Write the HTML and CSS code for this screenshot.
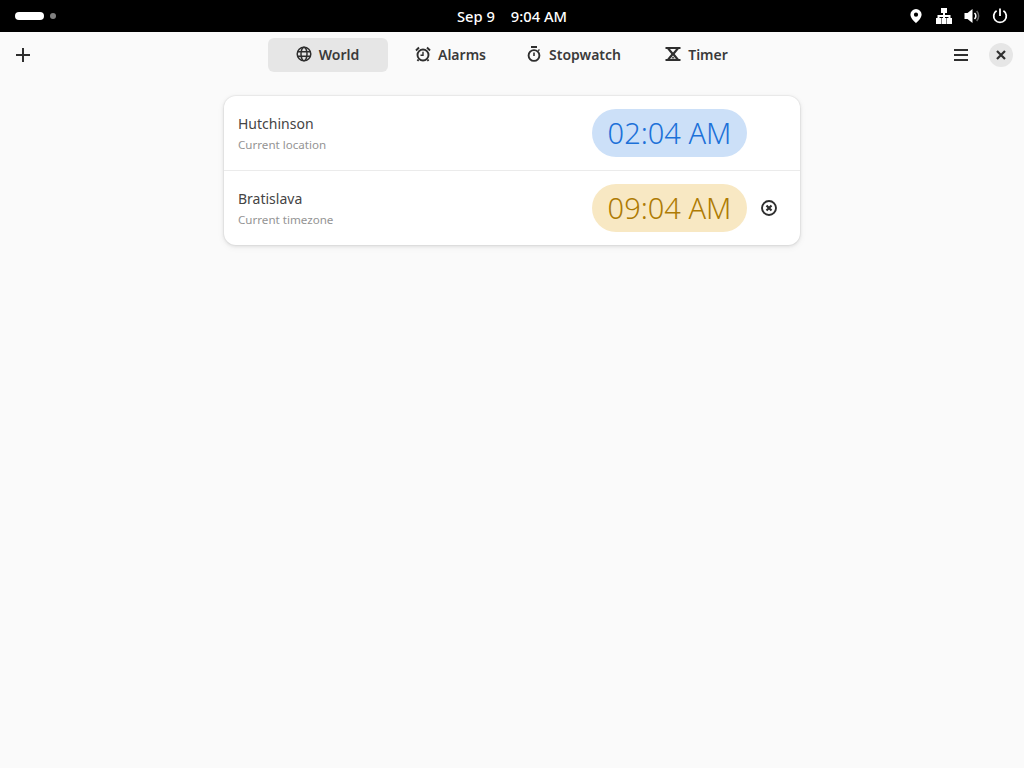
FILE: index.html
```html
<!DOCTYPE html>
<html lang="en">
<head>
    <meta charset="UTF-8">
    <meta name="viewport" content="width=device-width, initial-scale=1.0">
    <title>Clocks</title>
    <link rel="stylesheet" href="styles.css">
</head>
<body>
    <div class="topbar">
        <div class="workspaces">
            <span class="ws-active"></span>
            <span class="ws-dot"></span>
        </div>
        <div class="clock">
            <span>Sep 9</span>
            <span>9:04 AM</span>
        </div>
        <div class="tray">
            <svg class="tray-icon" viewBox="0 0 16 16"><path fill-rule="evenodd" d="M8 1a5.600 5.600 0 0 0-5.600 5.600C2.400 10 6 13.400 8 15.200c2-1.800 5.600-5.200 5.600-8.600A5.600 5.600 0 0 0 8 1zm0 3.600a2.100 2.100 0 1 1 0 4.200 2.100 2.100 0 0 1 0-4.200z" fill="#fff"/></svg>
            <svg class="tray-icon" viewBox="0 0 16 16" fill="#fff"><path d="M5 0h6v5H5zM0 10h5v6H0zM5.500 10h5v6h-5zM11 10h5v6h-5z"/><path d="M7 5h2v2h5.500v3h-2V9H9v1H7V9H3.500v1h-2V7H7z"/></svg>
            <svg class="tray-icon" viewBox="0 0 16 16"><path d="M0.500 5h3L8.500 1v14l-5-4h-3z" fill="#fff"/><path d="M10.500 5a4 4 0 0 1 0 6" fill="none" stroke="#fff" stroke-width="1.600"/><path d="M12.700 3a7.500 7.500 0 0 1 0 10" fill="none" stroke="#666" stroke-width="1.600"/></svg>
            <svg class="tray-icon" viewBox="0 0 16 16" fill="none" stroke="#fff" stroke-width="1.800"><path d="M8 0.500v7.500"/><path d="M4.600 2.800a6.300 6.300 0 1 0 6.800 0"/></svg>
        </div>
    </div>

    <header class="headerbar">
        <div class="header-left">
            <button class="icon-btn">
                <svg viewBox="0 0 16 16" fill="none" stroke="#2e2e2e" stroke-width="2"><path d="M8 1v14M1 8h14"/></svg>
            </button>
        </div>
        <nav class="tabs">
            <button class="tab tab-active">
                <svg viewBox="0 0 16 16" fill="none" stroke="#2e2e2e" stroke-width="1.500"><circle cx="8" cy="8" r="6.800"/><ellipse cx="8" cy="8" rx="3" ry="6.800"/><path d="M1.500 5.700h13M1.500 10.300h13"/></svg>
                <span>World</span>
            </button>
            <button class="tab">
                <svg viewBox="0 0 16 16" fill="none" stroke="#2e2e2e" stroke-width="1.900"><circle cx="8" cy="9" r="5.500"/><path d="M8 5.700V9.300H5.500" stroke-width="1.400"/><path d="M1 4.500 4 1.500M15 4.500 12 1.500M3.500 13.500 2.500 15M12.500 13.500l1 1.500"/></svg>
                <span>Alarms</span>
            </button>
            <button class="tab">
                <svg viewBox="0 0 16 16" fill="none" stroke="#2e2e2e" stroke-width="1.900"><circle cx="8" cy="9.500" r="5.400"/><path d="M5 1h6" stroke-width="2"/><path d="M8 6.500v3.500" stroke-width="1.600"/><path d="M12.200 4.700l1.300-1.200" stroke-width="1.400"/></svg>
                <span>Stopwatch</span>
            </button>
            <button class="tab">
                <svg viewBox="0 0 16 16"><path d="M0.500 1h15v2h-1.700L9.700 8l4.100 5h1.700v2H0.500v-2h1.700l4.100-5-4.100-5H0.500z" fill="#2e2e2e"/><path d="M5 3h6L8 6.500zM8 9.500l2.900 3.500H5.100z" fill="#fafafa"/><path d="M6.300 12.600h3.400L8 10.400z" fill="#2e2e2e"/></svg>
                <span>Timer</span>
            </button>
        </nav>
        <div class="header-right">
            <button class="icon-btn">
                <svg viewBox="0 0 16 16" fill="none" stroke="#2e2e2e" stroke-width="2"><path d="M1 3h14M1 8h14M1 13h14"/></svg>
            </button>
            <button class="close-btn">
                <svg viewBox="0 0 16 16" fill="none" stroke="#2e2e2e" stroke-width="2.200"><path d="M4 4l8 8M12 4l-8 8"/></svg>
            </button>
        </div>
    </header>

    <main class="content">
        <div class="card">
            <div class="row">
                <div class="place">
                    <div class="place-name">Hutchinson</div>
                    <div class="place-note">Current location</div>
                </div>
                <div class="time time-night">02:04 AM</div>
                <div class="row-action"></div>
            </div>
            <div class="row">
                <div class="place">
                    <div class="place-name">Bratislava</div>
                    <div class="place-note">Current timezone</div>
                </div>
                <div class="time time-day">09:04 AM</div>
                <div class="row-action">
                    <svg viewBox="0 0 16 16" fill="none" stroke="#2e2e2e"><circle cx="8" cy="8" r="7" stroke-width="1.900"/><path d="M5.500 5.500l5 5M10.500 5.500l-5 5" stroke-width="2.200"/></svg>
                </div>
            </div>
        </div>
    </main>
</body>
</html>
```

FILE: styles.css
```css
body {
    font-family: "Noto Sans", sans-serif;
    background-color: #fafafa;
    color: #2e2e2e;
    margin: 0;
    min-height: 100vh;
}

button {
    font-family: inherit;
    color: inherit;
    background: none;
    border: none;
    padding: 0;
}

.topbar {
    display: grid;
    grid-template-columns: 1fr auto 1fr;
    align-items: center;
    height: 32px;
    background-color: #000;
    color: #fff;
    font-size: 14.700px;
    font-weight: 500;
}

.workspaces {
    display: flex;
    align-items: center;
    gap: 6px;
    padding-left: 15px;
}

.ws-active {
    width: 29px;
    height: 8px;
    border-radius: 4px;
    background-color: #fff;
}

.ws-dot {
    width: 6px;
    height: 6px;
    border-radius: 50%;
    background-color: #808080;
}

.clock {
    display: flex;
    gap: 16px;
    margin-top: -1px;
}

.tray {
    display: flex;
    justify-content: flex-end;
    gap: 12px;
    padding-right: 16px;
}

.tray-icon {
    width: 16px;
    height: 16px;
}

.headerbar {
    display: grid;
    grid-template-columns: 1fr auto 1fr;
    align-items: center;
    height: 46px;
}

.header-left {
    padding-left: 15px;
}

.header-right {
    display: flex;
    justify-content: flex-end;
    align-items: center;
    gap: 20px;
    padding-right: 11px;
}

.icon-btn {
    display: flex;
    width: 16px;
    height: 16px;
}

.close-btn {
    display: flex;
    align-items: center;
    justify-content: center;
    width: 24px;
    height: 24px;
    border-radius: 50%;
    background-color: #e6e6e6;
}

.close-btn svg {
    width: 16px;
    height: 16px;
}

.tabs {
    display: flex;
    gap: 3px;
}

.tab {
    display: flex;
    align-items: center;
    justify-content: center;
    gap: 7px;
    width: 120px;
    height: 34px;
    border-radius: 6px;
    font-size: 14px;
    font-weight: 600;
    color: #3a3a3a;
}

.tab svg {
    width: 16px;
    height: 16px;
    margin-top: -2px;
}

.tab span {
    margin-top: -2px;
}

.tab-active {
    background-color: #e6e6e6;
}

.content {
    display: flex;
    justify-content: center;
    padding-top: 18px;
}

.card {
    width: 576px;
    background-color: #fff;
    border-radius: 12px;
    box-shadow: 0 0 0 1px rgba(0, 0, 0, 0.03), 0 1px 3px 1px rgba(0, 0, 0, 0.07), 0 2px 6px 2px rgba(0, 0, 0, 0.03);
}

.row {
    display: flex;
    align-items: center;
    box-sizing: border-box;
    height: 74px;
    padding-left: 14px;
}

.row + .row {
    height: 75px;
    border-top: 1px solid #ebebeb;
}

.place {
    flex: 1;
}

.place-name {
    font-size: 14px;
    line-height: 20px;
    color: #444;
}

.place-note {
    margin-top: 3px;
    font-size: 11.600px;
    line-height: 16px;
    color: #949494;
}

.time {
    display: flex;
    align-items: center;
    justify-content: center;
    width: 155px;
    height: 48px;
    border-radius: 24px;
    font-size: 29px;
    font-weight: 350;
    padding-bottom: 1px;
    box-sizing: border-box;
}

.time-night {
    background-color: #cce0f8;
    color: #1c71d8;
}

.time-day {
    background-color: #f8e8c3;
    color: #ae7b03;
}

.row-action {
    display: flex;
    justify-content: center;
    width: 44px;
    margin-right: 9px;
}

.row-action svg {
    width: 16px;
    height: 16px;
}
```
